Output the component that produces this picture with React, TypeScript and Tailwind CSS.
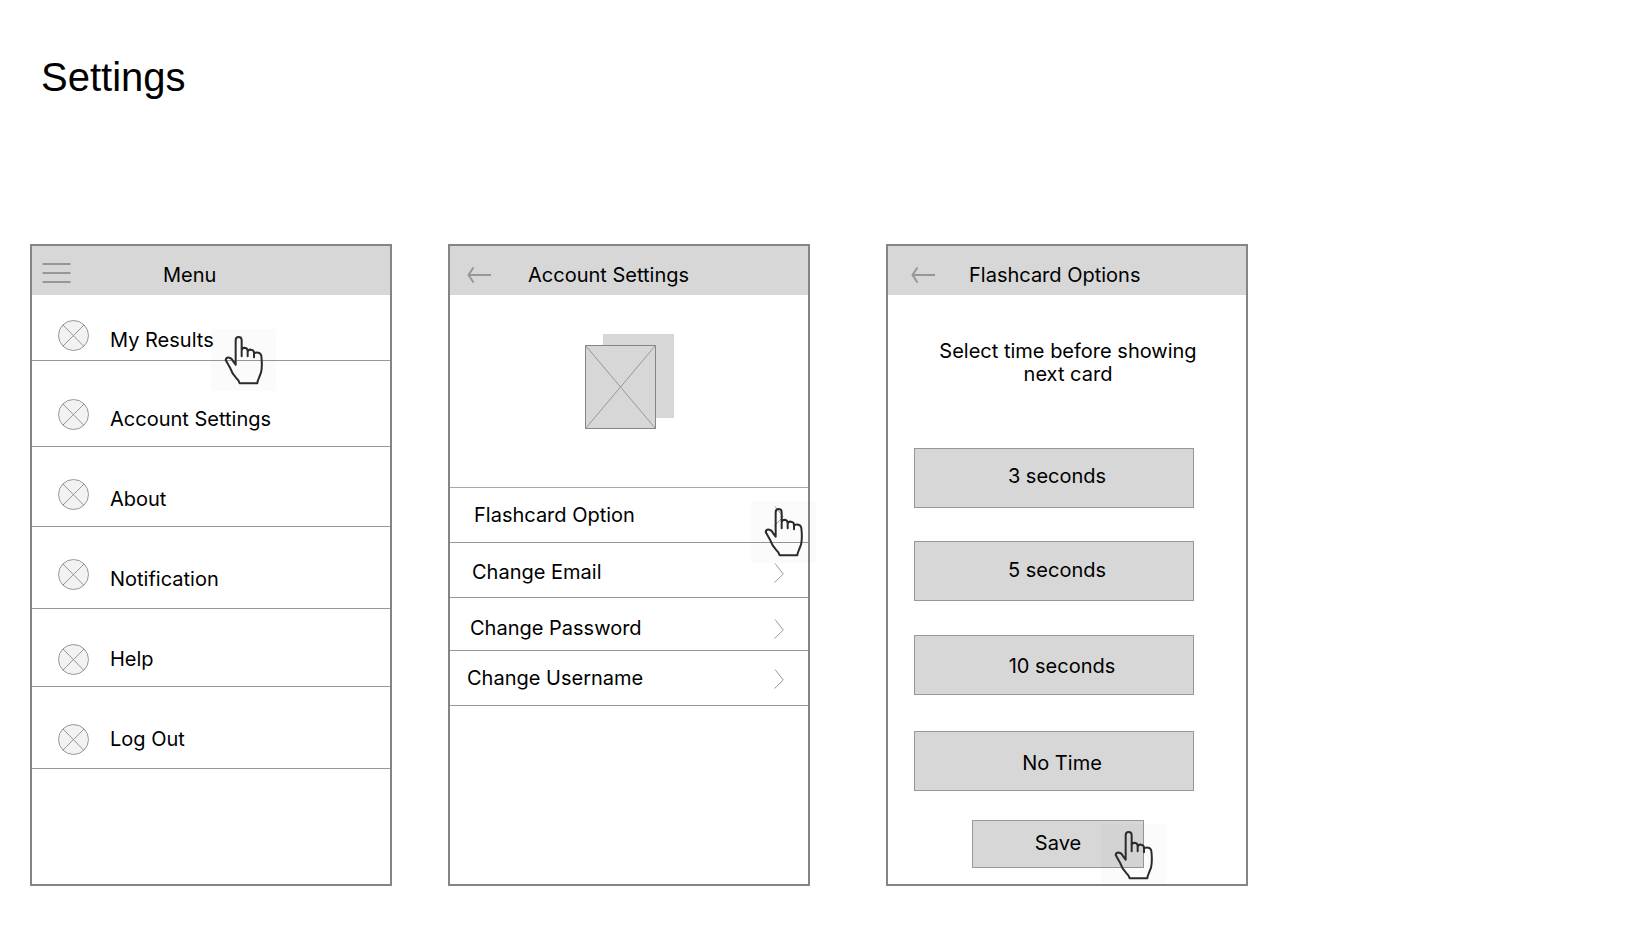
import type { ReactNode } from "react";

function HandCursor({ className }: { className: string }) {
  return (
    <span className={`pointer-events-none absolute z-10 h-[62px] w-[65px] bg-black/[0.015] ${className}`}>
      <svg viewBox="0 0 195 186" className="h-full w-full" fill="none" stroke="#2b2b2b" strokeWidth="6" strokeLinejoin="round" strokeLinecap="round" aria-hidden="true">
        <path d="M74 107V34Q74 24 83 24Q92 24 92 34V82V64Q93 56 101 56Q110 57 110 66V82V68Q112 61 120 62Q129 63 129 71V85V74Q133 69 142 71Q150 73 151 81C153 98 153 118 150 131L143 149Q139 157 139 163H86Q84 154 75 146C67 137 61 127 58 118L44 93Q46 84 55 86Q63 88 67 98L74 107" />
      </svg>
    </span>
  );
}

function MenuIcon() {
  return (
    <svg viewBox="0 0 29 22" className="mb-1 h-[22px] w-[29px]" stroke="#979797" strokeWidth="2" aria-hidden="true">
      <path d="M0.5 2H28.5M0.5 11H28.5M0.5 20H28.5" />
    </svg>
  );
}

function BackIcon() {
  return (
    <svg viewBox="0 0 24 18" className="h-[18px] w-[24px]" fill="none" stroke="#979797" strokeWidth="2" aria-hidden="true">
      <path d="M24 9H1M6.5 1.5L1.5 9L6.5 16.5" />
    </svg>
  );
}

function CrossedCircle() {
  return (
    <svg viewBox="0 0 31 31" className="h-[31px] w-[31px] shrink-0" fill="#f3f2f3" stroke="#979797" strokeWidth="1" aria-hidden="true">
      <circle cx="15.5" cy="15.5" r="15" />
      <path d="M5 5L25.5 26M26 5L5 26" />
    </svg>
  );
}

function Chevron() {
  return (
    <svg viewBox="0 0 10 20" className="h-5 w-[10px] shrink-0" fill="none" stroke="#979797" strokeWidth="1" aria-hidden="true">
      <path d="M1 0.5L9.3 11L0.5 19.5" />
    </svg>
  );
}

function PlaceholderImage() {
  return (
    <svg viewBox="0 0 89 95" className="h-[95px] w-[89px]" role="img" aria-label="Profile picture">
      <rect x="18" y="0" width="71" height="84" fill="#d7d7d7" />
      <rect x="0.5" y="11.5" width="70" height="83" fill="#d7d7d7" stroke="#858585" />
      <path d="M0.5 11.5L70.5 94.5M70.5 11.5L0.5 94.5" stroke="#979797" />
    </svg>
  );
}

type ScreenProps = {
  title: string;
  icon: ReactNode;
  iconLabel: string;
  headerClass: string;
  className?: string;
  children: ReactNode;
};

function Screen({ title, icon, iconLabel, headerClass, className = "", children }: ScreenProps) {
  return (
    <section className={`w-full max-w-[362px] border-2 border-[#858585] bg-white ${className}`}>
      <header className={`flex h-[49px] items-center bg-[#d7d7d7] pt-2 ${headerClass}`}>
        <button type="button" aria-label={iconLabel}>
          {icon}
        </button>
        <h2 className="pt-[2px] whitespace-nowrap">{title}</h2>
      </header>
      {children}
    </section>
  );
}

const menuItems = [
  { label: "My Results", row: "items-end pt-[25px] pb-[9px]", pointed: true },
  { label: "Account Settings", row: "items-end pt-[38px] pb-4" },
  { label: "About", row: "items-end pt-8 pb-4" },
  { label: "Notification", row: "items-end pt-8 pb-[18px]" },
  { label: "Help", row: "items-center pt-[35px] pb-[11px]" },
  { label: "Log Out", row: "items-center pt-[37px] pb-[13px]" },
];

const accountItems = [
  { label: "Flashcard Option", row: "h-[55px] pl-6", pointed: true },
  { label: "Change Email", row: "h-[55px] pl-[22px] pt-1" },
  { label: "Change Password", row: "h-[53px] pl-5 pt-2" },
  { label: "Change Username", row: "h-[55px] pl-[17px]" },
];

const timeOptions = [
  { label: "3 seconds", look: "pl-[6px] pb-[3px]" },
  { label: "5 seconds", look: "mt-[33px] pl-[6px] pb-px" },
  { label: "10 seconds", look: "mt-[34px] pl-4 pt-[2px]" },
  { label: "No Time", look: "mt-9 pl-4 pt-1" },
];

export default function App() {
  return (
    <main className="min-h-screen bg-white pt-[53px] pr-6 pb-16 pl-[30px] font-['Inter',sans-serif] text-[20px] leading-[23px] text-black">
      <h1 className="pl-[11px] font-['Liberation_Sans',sans-serif] text-[40px] leading-[48px]">Settings</h1>

      <div className="mt-[143px] flex">
        <Screen title="Menu" icon={<MenuIcon />} iconLabel="Open menu" headerClass="gap-[92px] pl-[10px]">
          <ul>
            {menuItems.map((item) => (
              <li key={item.label} className="relative border-b border-[#979797]">
                <a href="#" className={`flex gap-[21px] pl-[26px] ${item.row}`}>
                  <CrossedCircle />
                  <span className="leading-[21px]">{item.label}</span>
                </a>
                {item.pointed && <HandCursor className="top-[34px] left-[179px]" />}
              </li>
            ))}
          </ul>
        </Screen>

        <Screen title="Account Settings" icon={<BackIcon />} iconLabel="Back" headerClass="gap-[37px] pl-[17px]" className="ml-[56px]">
          <div className="flex justify-center border-b border-[#a8a8a8] pt-[39px] pb-[58px]">
            <PlaceholderImage />
          </div>
          <ul>
            {accountItems.map((item) => (
              <li key={item.label} className="relative border-b border-[#979797]">
                <a href="#" className={`-mb-px flex items-center justify-between pr-6 ${item.row}`}>
                  <span>{item.label}</span>
                  <Chevron />
                </a>
                {item.pointed && <HandCursor className="top-[13px] right-[-8px]" />}
              </li>
            ))}
          </ul>
        </Screen>

        <Screen title="Flashcard Options" icon={<BackIcon />} iconLabel="Back" headerClass="gap-[34px] pl-[23px]" className="ml-[76px]">
          <div className="flex flex-col pt-[45px] pr-[52px] pb-4 pl-[26px]">
            <p className="-mr-7 mb-[62px] text-center">
              Select time before showing
              <br />
              next card
            </p>
            {timeOptions.map((option) => (
              <button key={option.label} type="button" className={`h-[60px] border border-[#979797] bg-[#d7d7d7] ${option.look}`}>
                {option.label}
              </button>
            ))}
            <div className="relative mt-[29px] ml-[58px] w-[172px]">
              <button type="button" className="block h-12 w-full border border-[#979797] bg-[#d7d7d7] pb-[2px]">
                Save
              </button>
              <HandCursor className="top-1 left-[129px]" />
            </div>
          </div>
        </Screen>
      </div>
    </main>
  );
}
